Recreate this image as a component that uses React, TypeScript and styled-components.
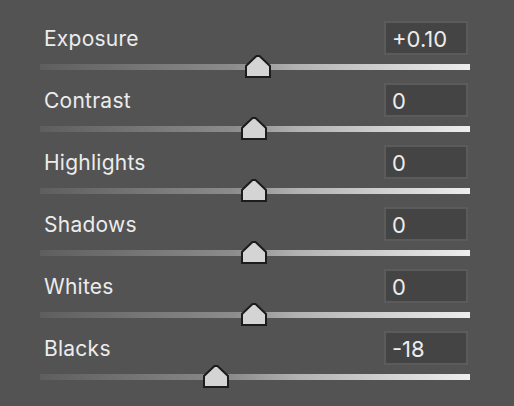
import styled, { createGlobalStyle } from "styled-components";

const GlobalStyle = createGlobalStyle`
	html, body {
		margin: 0;
		padding: 0;
		background: #535353;
	}
`;

const Panel = styled.div`
	width: 514px;
	height: 406px;
	box-sizing: border-box;
	padding: 21px 44px 0 40px;
	background: #535353;
	font-family: Inter, "Liberation Sans", sans-serif;
	color: #ececec;
	overflow: hidden;
`;

const Row = styled.div`
	display: flex;
	flex-direction: column;
	gap: 9px;
	height: 62px;
`;

const Header = styled.div`
	display: flex;
	align-items: center;
	justify-content: space-between;
	padding-left: 4px;
`;

const Label = styled.span`
	font-size: 21px;
	letter-spacing: 0.25px;
	line-height: 1;
	padding-top: 1px;
`;

const Value = styled.div`
	box-sizing: border-box;
	width: 84px;
	height: 34px;
	margin-right: 2px;
	padding: 2px 6px 0;
	display: flex;
	align-items: center;
	background: #444444;
	border: 2px solid #5b5b5b;
	font-size: 22px;
	line-height: 1;
`;

const Track = styled.div`
	position: relative;
	height: 6px;
	background: linear-gradient(to right, #5e5e5e 0%, #8c8c8c 45%, #b2b2b2 60%, #eeeeee 100%);
`;

const Thumb = styled.svg`
	position: absolute;
	top: -9px;
	width: 26px;
	height: 23px;
	transform: translateX(-50%);
`;

const sliders = [
	{ label: "Exposure", value: "+0.10", pos: 218 },
	{ label: "Contrast", value: "0", pos: 214 },
	{ label: "Highlights", value: "0", pos: 214 },
	{ label: "Shadows", value: "0", pos: 214 },
	{ label: "Whites", value: "0", pos: 214 },
	{ label: "Blacks", value: "-18", pos: 176 },
];

export default function App() {
	return (
		<>
			<GlobalStyle />
			<Panel>
				{sliders.map((s) => (
					<Row key={s.label}>
						<Header>
							<Label>{s.label}</Label>
							<Value>{s.value}</Value>
						</Header>
						<Track>
							<Thumb viewBox="0 0 26 23" style={{ left: s.pos }}>
								<path
									d="M11.5 1 L14.5 1 L25 11 L25 22 L1 22 L1 11 Z"
									fill="#d4d4d4"
									stroke="#1c1c1c"
									strokeWidth="2"
									strokeLinejoin="miter"
								/>
							</Thumb>
						</Track>
					</Row>
				))}
			</Panel>
		</>
	);
}
